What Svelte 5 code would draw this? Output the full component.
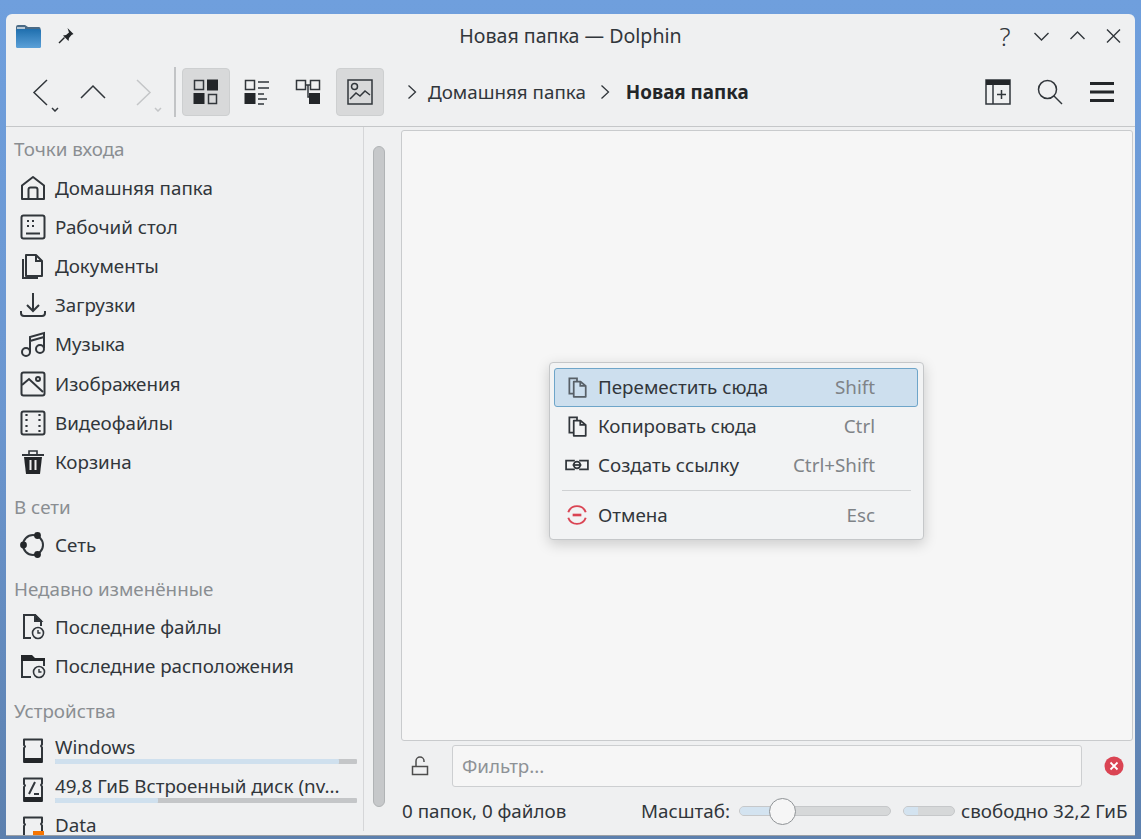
<script>
  const groups = [
    { title: 'Точки входа', items: [['home', 'Домашняя папка'], ['desktop', 'Рабочий стол'], ['docs', 'Документы'], ['down', 'Загрузки'], ['music', 'Музыка'], ['image', 'Изображения'], ['video', 'Видеофайлы'], ['trash', 'Корзина']] },
    { title: 'В сети', items: [['net', 'Сеть']] },
    { title: 'Недавно изменённые', items: [['recent', 'Последние файлы'], ['recentdir', 'Последние расположения']] }
  ];
  const devices = [
    { icon: 'disk', label: 'Windows', used: 94 },
    { icon: 'disk2', label: '49,8 ГиБ Встроенный диск (nv...', used: 34 },
    { icon: 'disk3', label: 'Data', used: 0 }
  ];
  const menu = [
    { icon: 'copy', label: 'Переместить сюда', key: 'Shift', active: true },
    { icon: 'copy', label: 'Копировать сюда', key: 'Ctrl' },
    { icon: 'link', label: 'Создать ссылку', key: 'Ctrl+Shift' }
  ];
</script>

{#snippet icon(name)}
  <svg class="ico" viewBox="0 0 26 26" fill="none" stroke="#31363b" stroke-width="2" aria-hidden="true">
    {#if name === 'home'}
      <path d="M2 24V10.500L13 2l11 8.500V24z" stroke-linejoin="round" /><path d="M8.500 24V14.500a2 2 0 0 1 2-2h5a2 2 0 0 1 2 2V24" />
    {:else if name === 'desktop'}
      <rect x="1.500" y="1.500" width="23" height="23" rx="2" /><path d="M6 19.500h14" /><path d="M7 7h2M12 7h2M7 12h2M12 12h2" stroke-width="2.200" />
    {:else if name === 'docs'}
      <path d="M6 2h10l6 6v15H6z" stroke-linejoin="round" /><path d="M16 2v6h6" /><path d="M3 6v19h15" />
    {:else if name === 'down'}
      <path d="M13 1v18M7 13l6 6 6-6" /><path d="M1 19v2a3 3 0 0 0 3 3h18a3 3 0 0 0 3-3v-2" />
    {:else if name === 'music'}
      <path d="M10 21V6l14-4v15M10 10l14-4" /><circle cx="6" cy="21" r="4" /><circle cx="20" cy="18" r="4" />
    {:else if name === 'image'}
      <rect x="1.500" y="1.500" width="23" height="23" rx="2" /><path d="M2 14l7-6 14 13" /><circle cx="18" cy="8" r="2" />
    {:else if name === 'video'}
      <rect x="1.500" y="1.500" width="23" height="23" rx="2" /><path d="M6.500 4v2M6.500 9v2M6.500 15v2M6.500 20v2M19.500 4v2M19.500 9v2M19.500 15v2M19.500 20v2" stroke-width="2.200" />
    {:else if name === 'trash'}
      <path d="M4 8h18l-2 17H6z" fill="#232629" stroke="none" /><path d="M2 6h22" /><path d="M9 6V2h8v4" stroke-width="1.600" /><path d="M10.500 11v10M15.500 11v10" stroke="#eff0f1" />
    {:else if name === 'net'}
      <circle cx="13" cy="13" r="10" /><circle cx="17.500" cy="3.500" r="3.400" fill="#232629" stroke="none" /><circle cx="3.500" cy="13" r="3.400" fill="#232629" stroke="none" /><circle cx="17.500" cy="22.500" r="3.400" fill="#232629" stroke="none" />
    {:else if name === 'recent'}
      <path d="M11 24H4V1h11l6 6v5" /><path d="M15 1l6 6h-6z" fill="#232629" /><circle cx="18" cy="19" r="5.500" stroke-width="1.600" /><path d="M18 16v3h2.500" stroke-width="1.400" />
    {:else if name === 'recentdir'}
      <path d="M1 8V2h11l3 3h10v3z" fill="#232629" stroke="none" /><path d="M2 8v16h9M24 8v5" /><circle cx="19" cy="19" r="5.500" stroke-width="1.600" /><path d="M19 16v3h2.500" stroke-width="1.400" />
    {:else}
      <path d="M4 1.500h18v5l-1 1.500 1 1.500V24H4V10l1-1.500-1-1.500z" stroke-linejoin="round" />
      {#if name === 'disk3'}
        <path d="M13 15h11v6H13z" fill="#f67400" stroke="none" />
      {:else}
        <path d="M4 20h18v5H4z" fill="#232629" stroke="none" />
      {/if}
      {#if name === 'disk2'}<path d="M9 17l6-12M14 17h5" />{/if}
    {/if}
  </svg>
{/snippet}

{#snippet small(name)}
  <svg class="mi" viewBox="0 0 22 22" fill="none" stroke="#31363b" stroke-width="1.600" aria-hidden="true">
    {#if name === 'copy'}
      <path d="M8 6h6l5 4v10H8z" stroke-linejoin="round" /><path d="M14 6v4h5" /><path d="M8 17H4V3h7v3" />
    {:else if name === 'link'}
      <path d="M9 7H1v8h8M13 7h8v8h-8" /><path d="M7 11h8" /><circle cx="11" cy="11" r="3" />
    {/if}
  </svg>
{/snippet}

<div class="window">
  <header class="titlebar">
    <svg class="app" width="26" height="24" viewBox="0 0 26 24" aria-hidden="true">
      <defs><linearGradient id="fld" x1="0" y1="0" x2="0" y2="1"><stop offset="0" stop-color="#1f6fae" /><stop offset="1" stop-color="#5ba0d8" /></linearGradient></defs>
      <path d="M1 3a2 2 0 0 1 2-2h7l3 2h11a1.500 1.500 0 0 1 1.500 1.500V7H1z" fill="#4a6a85" />
      <rect x="1" y="5" width="25" height="19" rx="1.500" fill="url(#fld)" />
      <path d="M2 4h8" stroke="#dde6ee" stroke-width="1.500" />
    </svg>
    <svg class="pin" width="18" height="18" viewBox="0 0 18 18" aria-hidden="true">
      <path d="M10.500 1l6 6-2 1-2.500 3-.5 3L6 8.500l3-.5 3-2.500z" fill="#232629" /><path d="M7.500 10.500L2 16" stroke="#232629" stroke-width="1.500" />
    </svg>
    <div class="win-title">Новая папка — Dolphin</div>
    <div class="win-btns">
      <span class="help">?</span>
      <svg width="17" height="16" viewBox="0 0 17 16"><path d="M1.500 5l7 7 7-7" /></svg>
      <svg width="17" height="16" viewBox="0 0 17 16"><path d="M1.500 11l7-7 7 7" /></svg>
      <svg width="17" height="16" viewBox="0 0 17 16"><path d="M2 1.500l13 13M15 1.500l-13 13" /></svg>
    </div>
  </header>

  <div class="toolbar">
    <div class="tool nav">
      <svg width="28" height="40" viewBox="0 0 28 40"><path d="M16 8L3 20.500 16 33" /><path d="M21 36l3 3 3-3" stroke-width="1.300" /></svg>
    </div>
    <div class="tool nav up">
      <svg width="28" height="18" viewBox="0 0 28 18"><path d="M2 15L14 3l12 12" /></svg>
    </div>
    <div class="tool nav off">
      <svg width="28" height="40" viewBox="0 0 28 40"><path d="M3 8l13 12.500L3 33" /><path d="M21 36l3 3 3-3" stroke-width="1.300" /></svg>
    </div>
    <div class="vsep"></div>
    <button class="vbtn on" aria-label="Значки">
      <svg width="26" height="26" viewBox="0 0 26 26"><rect x="1.500" y="1.500" width="9" height="9" class="o" /><rect x="14" y="0.500" width="11" height="11" class="f" /><rect x="0.500" y="14" width="11" height="11" class="f" /><rect x="15.500" y="15.500" width="8" height="9" class="o" /></svg>
    </button>
    <button class="vbtn" aria-label="Компактно">
      <svg width="26" height="26" viewBox="0 0 26 26"><rect x="1.500" y="1.500" width="9" height="9" class="o" /><path class="l" d="M14 3h11M14 9h11" /><rect x="0.500" y="14" width="11" height="11" class="f" /><path class="l" d="M14 15h6M14 20h9M14 25h6" /></svg>
    </button>
    <button class="vbtn wide" aria-label="Таблица">
      <svg width="26" height="26" viewBox="0 0 26 26"><rect x="1.500" y="1.500" width="9" height="9" class="o" /><rect x="15.500" y="1.500" width="9" height="9" class="o" /><path class="l" d="M10 6h6M13 6v12h2" /><rect x="14" y="14" width="11" height="11" class="f" /></svg>
    </button>
    <button class="vbtn on" aria-label="Просмотр">
      <svg width="26" height="26" viewBox="0 0 26 26"><rect x="1" y="1" width="24" height="24" class="o" /><circle cx="7.500" cy="7.500" r="3" class="o" /><path class="l" d="M3 20l6-6 4 3 5-5 5 4" /></svg>
    </button>

    <nav class="crumbs">
      <svg width="10" height="16" viewBox="0 0 10 16"><path d="M1.500 1.500L8.500 8l-7 6.500" /></svg>
      <span>Домашняя папка</span>
      <svg width="10" height="16" viewBox="0 0 10 16"><path d="M1.500 1.500L8.500 8l-7 6.500" /></svg>
      <b>Новая папка</b>
    </nav>

    <div class="tool-right">
      <svg width="26" height="26" viewBox="0 0 26 26"><rect x="1" y="1" width="24" height="24" fill="none" stroke="#31363b" stroke-width="1.500" /><rect x="1" y="1" width="24" height="5" fill="#232629" /><path d="M8 6v19" stroke="#31363b" stroke-width="1.500" /><path d="M16.500 11v9M12 15.500h9" stroke="#31363b" stroke-width="1.500" /></svg>
      <svg width="26" height="26" viewBox="0 0 26 26"><circle cx="10.500" cy="10.500" r="9" fill="none" stroke="#31363b" stroke-width="1.500" /><path d="M17 17l8 8" stroke="#31363b" stroke-width="1.500" /></svg>
      <svg width="26" height="22" viewBox="0 0 26 22"><path d="M1 2.500h24M1 11h24M1 19.500h24" stroke="#232629" stroke-width="3" /></svg>
    </div>
  </div>

  <div class="body">
    <aside class="places">
      <div class="list">
        {#each groups as g}
          <h3>{g.title}</h3>
          {#each g.items as [ic, label]}
            <div class="row">{@render icon(ic)}<span>{label}</span></div>
          {/each}
        {/each}
        <h3>Устройства</h3>
        {#each devices as d}
          <div class="row device">
            {@render icon(d.icon)}
            <div class="dev-text">
              <span>{d.label}</span>
              {#if d.used}<div class="cap"><i style="width: {d.used}%"></i></div>{/if}
            </div>
          </div>
        {/each}
      </div>
      <div class="scroll"><div class="thumb"></div></div>
    </aside>

    <main class="content">
      <div class="view">
        <div class="menu">
          {#each menu as m}
            <div class="mrow" class:active={m.active}>
              <span class="micon">{@render small(m.icon)}</span>
              <span class="mlabel">{m.label}</span>
              <span class="mkey">{m.key}</span>
            </div>
          {/each}
          <div class="msep"></div>
          <div class="mrow">
            <span class="micon">
              <svg class="mi" viewBox="0 0 22 22" fill="none" stroke="#da4453" stroke-width="1.800" aria-hidden="true"><path d="M3 8.500a8.500 8.500 0 0 1 16 0M3 13.500a8.500 8.500 0 0 0 16 0" /><path d="M7 11h8" stroke-width="2.400" /></svg>
            </span>
            <span class="mlabel">Отмена</span>
            <span class="mkey">Esc</span>
          </div>
        </div>
      </div>

      <div class="filter">
        <svg width="18" height="20" viewBox="0 0 18 20" fill="none" stroke="#4d4d4d" stroke-width="1.500"><rect x="1.500" y="10.500" width="15" height="8" /><path d="M5 10V5a4 4 0 0 1 8 0v1" /></svg>
        <div class="input">Фильтр...</div>
        <svg class="clear" width="20" height="20" viewBox="0 0 20 20"><circle cx="10" cy="10" r="9.500" fill="#da4453" /><path d="M6.500 6.500l7 7M13.500 6.500l-7 7" stroke="#fff" stroke-width="1.800" /></svg>
      </div>

      <footer class="status">
        <span class="count">0 папок, 0 файлов</span>
        <span class="zoom">Масштаб:</span>
        <div class="slider"><i></i><b></b></div>
        <div class="free"><i></i></div>
        <span>свободно 32,2 ГиБ</span>
      </footer>
    </main>
  </div>
</div>

<style>
  :global(body) {
    margin: 0;
    height: 839px;
    overflow: hidden;
    background: linear-gradient(180deg, #6f9fdd 0%, #6b96cf 50%, #5c80ae 100%);
    font-family: 'Noto Sans', sans-serif;
    color: #31363b;
  }

  .window {
    box-sizing: border-box;
    margin: 14px 6px 0;
    height: 822px;
    background: #eff0f1;
    border-radius: 6px 6px 0 0;
    border-bottom: 1px solid #9a9fa5;
    display: flex;
    flex-direction: column;
    overflow: hidden;
    font-size: 18.800px;
  }

  .titlebar {
    height: 44px;
    display: flex;
    align-items: center;
    padding: 0 9px;
    position: relative;
    flex: none;
  }

  .app { margin-right: 16px; }

  .win-title {
    position: absolute;
    left: 0;
    right: 0;
    top: 9px;
    text-align: center;
    line-height: 26px;
    font-size: 19.600px;
  }

  .win-btns {
    margin-left: auto;
    display: flex;
    align-items: center;
    gap: 19px;
    padding-right: 4px;
    position: relative;
  }

  .win-btns svg path {
    fill: none;
    stroke: #31363b;
    stroke-width: 1.400;
  }

  .help {
    font-size: 26px;
    font-weight: 300;
    line-height: 24px;
    width: 16px;
    margin-right: 1px;
    text-align: center;
  }

  .toolbar {
    height: 69px;
    flex: none;
    display: flex;
    align-items: center;
    border-bottom: 1px solid #c5c7c9;
    padding-left: 25px;
    box-sizing: border-box;
  }

  .tool svg path {
    fill: none;
    stroke: #31363b;
    stroke-width: 1.500;
  }

  .tool { display: flex; align-items: center; }
  .nav.up { margin-left: 20px; }
  .nav.off { margin-left: 27px; }
  .nav.off svg path { stroke: #c4c6c8; }

  .vsep {
    width: 2px;
    height: 50px;
    background: #c2c4c6;
    margin-left: 12px;
    margin-right: 6px;
  }

  .vbtn {
    width: 48px;
    height: 48px;
    padding: 0;
    margin-right: 3px;
    border: 1px solid transparent;
    border-radius: 4px;
    background: none;
    display: flex;
    align-items: center;
    justify-content: center;
  }

  .vbtn.wide { margin-right: 4px; }

  .vbtn.on {
    background: #d8d9da;
    border-color: #cdcfd0;
  }

  .vbtn .o { fill: none; stroke: #31363b; stroke-width: 1.500; }
  .vbtn .f { fill: #232629; }
  .vbtn .l { fill: none; stroke: #31363b; stroke-width: 1.500; }

  .crumbs {
    display: flex;
    align-items: center;
    margin-left: 20px;
    white-space: nowrap;
  }

  .crumbs svg path { fill: none; stroke: #31363b; stroke-width: 1.300; }
  .crumbs span { margin: 0 14px 0 11px; }
  .crumbs b { margin-left: 16px; font-weight: 700; color: #232629; }

  .tool-right {
    margin-left: auto;
    display: flex;
    align-items: center;
    gap: 26px;
    padding-right: 20px;
  }

  .body {
    flex: 1;
    min-height: 0;
    display: flex;
  }

  .places {
    width: 358px;
    flex: none;
    display: flex;
    position: relative;
    border-right: 1px solid #d5d6d8;
    box-sizing: border-box;
    margin-bottom: 4px;
  }

  .list {
    width: 352px;
    padding-left: 8px;
    box-sizing: border-box;
  }

  h3 {
    margin: 0;
    box-sizing: border-box;
    font-size: 18.800px;
    font-weight: 400;
    color: #8a8e92;
    line-height: 26px;
    padding-top: 12px;
    height: 43.500px;
  }

  .list h3:first-child { height: 35px; padding-top: 9px; }

  .row {
    display: flex;
    align-items: center;
    height: 39.200px;
    padding-left: 6px;
    gap: 9px;
  }

  .row:nth-child(2) { margin-top: 6px; }

  .ico { width: 26px; height: 26px; flex: none; }

  .device { align-items: flex-start; }
  .device .ico { margin-top: 8px; }

  .dev-text {
    flex: 1;
    min-width: 0;
    padding-top: 5.300px;
    padding-right: 1px;
    line-height: 24px;
  }

  .cap {
    height: 5px;
    background: #c4c6c8;
    border-radius: 1px;
  }

  .cap i {
    display: block;
    height: 5px;
    background: #cfe0ee;
    border-radius: 1px;
  }

  .scroll {
    position: absolute;
    top: 19px;
    bottom: 24px;
    left: 367px;
  }

  .thumb {
    position: absolute;
    left: 0;
    top: 0;
    bottom: 0;
    width: 12px;
    border-radius: 6px;
    background: #c6c8ca;
    border: 1px solid #b0b3b5;
    box-sizing: border-box;
  }

  .content {
    flex: 1;
    min-width: 0;
    display: flex;
    flex-direction: column;
    padding: 3px 2px 0 37px;
  }

  .view {
    height: 611px;
    flex: none;
    box-sizing: border-box;
    background: #f6f6f6;
    border: 1px solid #c9cbcd;
    border-radius: 3px;
    position: relative;
  }

  .menu {
    position: absolute;
    left: 147px;
    top: 231px;
    width: 375px;
    height: 178px;
    box-sizing: border-box;
    padding: 5px 5px 5px 4px;
    background: #f2f3f4;
    border: 1px solid #c5c7c9;
    border-radius: 4px;
    box-shadow: 0 4px 14px rgba(0, 0, 0, 0.18);
  }

  .mrow {
    display: flex;
    align-items: center;
    height: 39px;
    box-sizing: border-box;
    border: 1px solid transparent;
    border-radius: 3px;
    padding: 0 42px 2px 10px;
  }

  .mrow.active {
    background: #cddfee;
    border-color: #6ea5c9;
  }

  .mrow.active .micon { opacity: 0.75; }

  .micon {
    width: 33px;
    display: flex;
    align-items: center;
    flex: none;
  }

  .mi { width: 24px; height: 24px; }
  .mlabel { flex: 1; }
  .mkey { color: #7f8387; }

  .msep {
    height: 1px;
    background: #cfd1d3;
    margin: 5px 7px 5px 8px;
  }

  .filter {
    height: 42px;
    margin-top: 4px;
    flex: none;
    display: flex;
    align-items: center;
    padding-left: 10px;
  }

  .input {
    box-sizing: border-box;
    width: 630px;
    height: 42px;
    margin-left: 23px;
    background: #f6f6f6;
    border: 1px solid #cdcfd1;
    border-radius: 3px;
    padding-left: 9px;
    line-height: 40px;
    color: #8e9296;
  }

  .clear { margin-left: 22px; }

  .status {
    display: flex;
    align-items: center;
    height: 44px;
    margin-top: 2px;
    white-space: nowrap;
  }

  .count { width: 239px; padding-left: 1px; }

  .zoom { margin-right: 9px; }

  .slider {
    position: relative;
    width: 152px;
    height: 10px;
    border-radius: 5px;
    background: #d6d8d9;
    border: 1px solid #c6c8ca;
    box-sizing: border-box;
  }

  .slider i {
    display: block;
    width: 34px;
    height: 100%;
    border-radius: 5px 0 0 5px;
    background: #d3e3f0;
  }

  .slider b {
    position: absolute;
    left: 29px;
    top: -9px;
    width: 27px;
    height: 27px;
    box-sizing: border-box;
    border-radius: 50%;
    background: #f6f6f6;
    border: 1px solid #8f9396;
  }

  .free {
    width: 52px;
    height: 10px;
    margin: 0 6px 0 12px;
    border-radius: 5px;
    background: #d6d8d9;
    border: 1px solid #c6c8ca;
    box-sizing: border-box;
    overflow: hidden;
  }

  .free i {
    display: block;
    width: 14px;
    height: 100%;
    background: #d3e3f0;
  }
</style>
